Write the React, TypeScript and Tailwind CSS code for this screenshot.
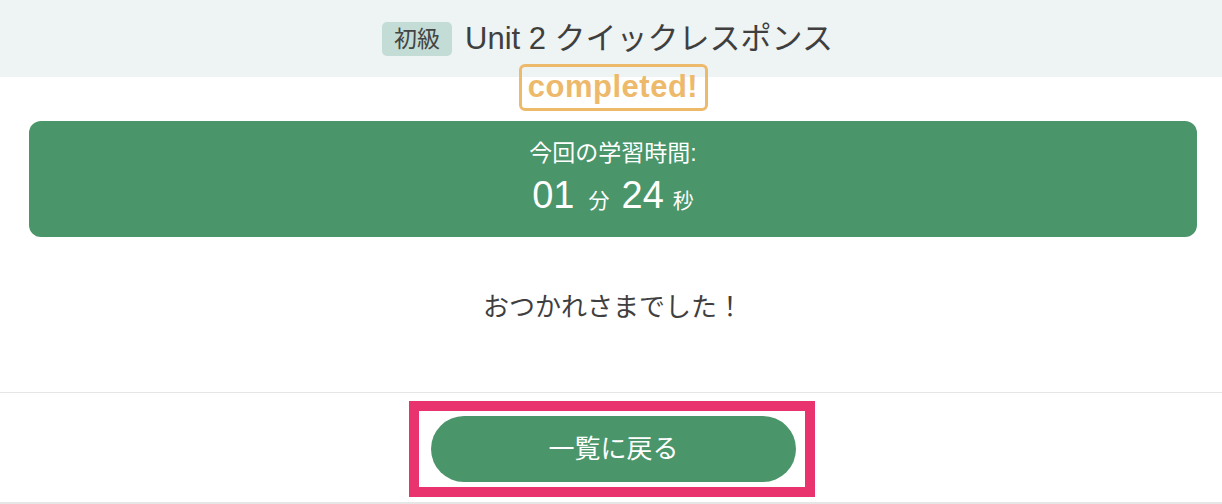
const font = {
  fontFamily: '"Liberation Sans", "Noto Sans CJK JP", sans-serif',
}

const StudyTime = () => {
  return (
    <div className="ml-[29px] mr-[25px] mt-[10px] h-[116px] rounded-[12px] bg-[#4a9569] text-white flex flex-col items-center pt-[17px]">
      <p className="text-[23px] leading-[30px]">今回の学習時間:</p>
      <p className="mt-[5px] h-[44px] flex items-baseline leading-[44px]">
        <span className="text-[38px]">01</span>
        <span className="text-[21px] ml-[14px] mr-[12px]">分</span>
        <span className="text-[38px]">24</span>
        <span className="text-[21px] ml-[9px]">秒</span>
      </p>
    </div>
  )
}

export default function App() {
  return (
    <div className="w-[1222px] h-[504px] bg-white overflow-hidden text-[#3f3f3f]" style={font}>
      <header className="h-[77px] bg-[#eef3f3] flex items-center justify-center gap-[13px] pr-[7px]">
        <span className="h-[34px] px-[12px] rounded-[5px] bg-[#c3dcd6] text-[#444] text-[23px] leading-[34px]">
          初級
        </span>
        <h1 className="text-[31px] leading-none">Unit 2 クイックレスポンス</h1>
      </header>

      <div className="flex justify-center -mt-[13px] pl-[4px]">
        <div className="h-[47px] w-[189px] border-[3px] border-[#edb96b] rounded-[6px] flex items-center justify-center text-[#edb96b] font-bold text-[31px] tracking-[0.5px]">
          completed!
        </div>
      </div>

      <StudyTime />

      <div className="h-[155px] flex items-center justify-center pb-[15px] pl-[4px]">
        <p className="text-[26px] leading-[36px]">おつかれさまでした！</p>
      </div>

      <div className="border-t border-[#e6e6e6]" />

      <div className="flex justify-center mt-[8px] pl-[2px]">
        <div className="border-[10px] border-[#e9336e] pl-[12px] pr-[9px] py-[5px]">
          <button className="w-[365px] h-[66px] rounded-full bg-[#4a9569] text-white text-[26px]">
            一覧に戻る
          </button>
        </div>
      </div>

      <div className="mt-[5px] h-[2px] bg-[#e6e6e6]" />
    </div>
  )
}
